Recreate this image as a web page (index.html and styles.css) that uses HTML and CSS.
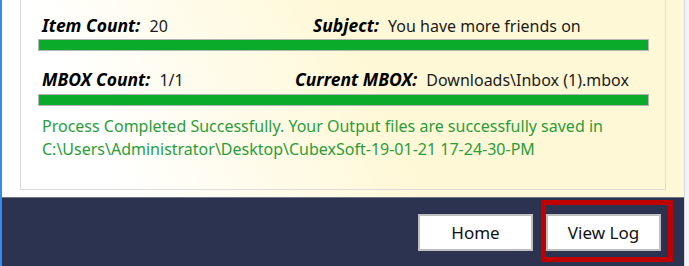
FILE: index.html
```html
<!DOCTYPE html>
<html lang="en">
<head>
    <meta charset="UTF-8">
    <meta name="viewport" content="width=device-width, initial-scale=1.0">
    <title>Conversion Complete</title>
    <link rel="stylesheet" href="styles.css">
</head>
<body>
    <div class="window">
        <div class="main">
            <div class="top">
                <div class="panel">
                    <div class="row row-first">
                        <span class="field field-a"><b>Item Count:</b> 20</span>
                        <span class="field"><b>Subject:</b> You have more friends on</span>
                    </div>
                    <div class="bar bar-first"></div>
                    <div class="row row-second">
                        <span class="field field-b"><b>MBOX Count:</b> 1/1</span>
                        <span class="field"><b>Current MBOX:</b> Downloads\Inbox (1).mbox</span>
                    </div>
                    <div class="bar bar-second"></div>
                    <p class="status">Process Completed Successfully. Your Output files are successfully saved in<br>C:\Users\Administrator\Desktop\CubexSoft-19-01-21 17-24-30-PM</p>
                </div>
            </div>
            <div class="footer">
                <button class="btn">Home</button>
                <div class="highlight">
                    <button class="btn">View Log</button>
                </div>
            </div>
        </div>
        <div class="edge"></div>
    </div>
</body>
</html>
```

FILE: styles.css
```css
body {
    margin: 0;
    background: #ffffff;
    font-family: "Noto Sans", "Open Sans", sans-serif;
}
.window {
    display: flex;
    width: 689px;
    height: 266px;
    border-left: 2px solid #2f8ef0;
    box-sizing: border-box;
}
.main {
    flex: 1;
    display: flex;
    flex-direction: column;
}
.edge {
    width: 4px;
    border-left: 1px solid #d3d7e2;
    background: #f4f4f6;
}
.top {
    height: 197px;
    padding: 0 18px;
    background: linear-gradient(65deg, #ffffff 15%, #fff8d6 55%);
}
.panel {
    height: 190px;
    box-sizing: border-box;
    border: 1px solid #dcdcdc;
    border-top: none;
    padding: 0 16px 0 17px;
}
.row {
    display: flex;
    align-items: baseline;
    height: 20px;
    line-height: 20px;
    font-size: 16px;
    color: #1a1a1a;
    padding-left: 4px;
    white-space: nowrap;
}
.row b {
    font-size: 17.5px;
    font-style: italic;
    font-weight: 700;
    color: #000;
    margin-right: 5px;
}
.row-first {
    padding-top: 15px;
}
.row-second {
    margin-top: 18px;
}
.field-a {
    width: 271px;
}
.field-b {
    width: 253px;
}
.bar {
    height: 10px;
    background: #0aab2b;
    border: 1px solid #b4b4b4;
}
.bar-first {
    margin-top: 4px;
}
.bar-second {
    margin-top: 5px;
}
.status {
    margin: 9px 0 0 4px;
    font-size: 16px;
    line-height: 23px;
    color: #2a9d3a;
    white-space: nowrap;
}
.footer {
    flex: 1;
    display: flex;
    justify-content: flex-end;
    align-items: flex-start;
    gap: 8px;
    padding: 2px 11px 0 0;
    background: #2b3350;
    border-top: 1px solid #6f7587;
}
.btn {
    width: 115px;
    height: 37px;
    margin-top: 14px;
    background: #ffffff;
    border: 2px solid #bfbfbf;
    font-family: "Noto Sans", "Open Sans", sans-serif;
    font-size: 17px;
    color: #111111;
    cursor: pointer;
}
.highlight {
    border: 5px solid #c00000;
    padding: 9px 7px 6px 0;
}
.highlight .btn {
    margin-top: 0;
}
```
